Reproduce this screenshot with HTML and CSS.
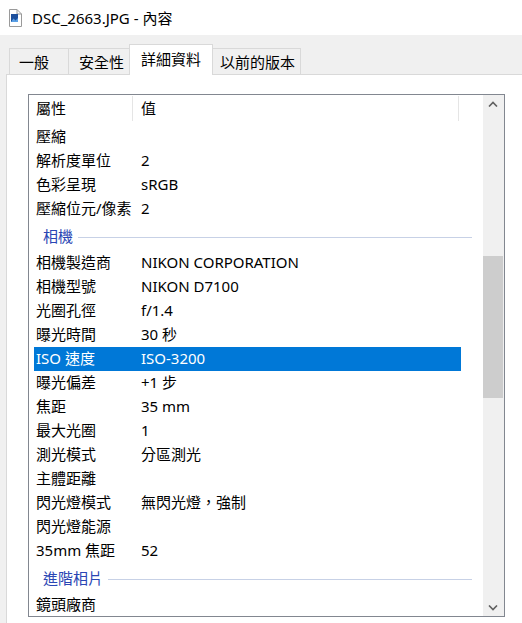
FILE: index.html
```html
<!DOCTYPE html>
<html lang="zh-Hant">
<head>
    <meta charset="UTF-8">
    <title>DSC_2663.JPG - 內容</title>
    <link rel="stylesheet" href="styles.css">
</head>
<body>
    <div class="titlebar">
        <svg class="file-icon" width="16" height="18" viewBox="0 0 16 18">
            <path d="M2.5 0.5 H10 L14.5 5 V17.5 H2.5 Z" fill="#fff" stroke="#9a9a9a"/>
            <path d="M10 0.5 V5 H14.5" fill="none" stroke="#9a9a9a"/>
            <rect x="4" y="5" width="7" height="8" fill="#1d4f9c"/>
            <path d="M4 13 L6.5 9.5 L8.5 11.5 L11 9 V13 Z" fill="#5aa0e6"/>
        </svg>
        <span class="title">DSC_2663.JPG - 內容</span>
    </div>

    <div class="tabs">
        <div class="tab tab-general">一般</div>
        <div class="tab tab-security">安全性</div>
        <div class="tab tab-details active">詳細資料</div>
        <div class="tab tab-versions">以前的版本</div>
    </div>

    <div class="panel">
        <div class="listview">
            <div class="list-content">
                <div class="list-header">
                    <div class="col-name">屬性</div>
                    <div class="col-value">值</div>
                </div>

                <div class="row"><span class="name">壓縮</span><span class="value"></span></div>
                <div class="row"><span class="name">解析度單位</span><span class="value">2</span></div>
                <div class="row"><span class="name">色彩呈現</span><span class="value">sRGB</span></div>
                <div class="row"><span class="name">壓縮位元/像素</span><span class="value">2</span></div>

                <div class="section"><span class="section-title">相機</span><span class="section-line"></span></div>

                <div class="row"><span class="name">相機製造商</span><span class="value">NIKON CORPORATION</span></div>
                <div class="row"><span class="name">相機型號</span><span class="value">NIKON D7100</span></div>
                <div class="row"><span class="name">光圈孔徑</span><span class="value">f/1.4</span></div>
                <div class="row"><span class="name">曝光時間</span><span class="value">30 秒</span></div>
                <div class="row selected"><span class="name">ISO 速度</span><span class="value">ISO-3200</span></div>
                <div class="row"><span class="name">曝光偏差</span><span class="value">+1 步</span></div>
                <div class="row"><span class="name">焦距</span><span class="value">35 mm</span></div>
                <div class="row"><span class="name">最大光圈</span><span class="value">1</span></div>
                <div class="row"><span class="name">測光模式</span><span class="value">分區測光</span></div>
                <div class="row"><span class="name">主體距離</span><span class="value"></span></div>
                <div class="row"><span class="name">閃光燈模式</span><span class="value">無閃光燈，強制</span></div>
                <div class="row"><span class="name">閃光燈能源</span><span class="value"></span></div>
                <div class="row"><span class="name">35mm 焦距</span><span class="value">52</span></div>

                <div class="section"><span class="section-title">進階相片</span><span class="section-line"></span></div>

                <div class="row"><span class="name">鏡頭廠商</span><span class="value"></span></div>
            </div>

            <div class="scrollbar">
                <div class="scroll-btn">
                    <svg width="10" height="6" viewBox="0 0 10 6"><polyline points="1,5.5 5,1.5 9,5.5" fill="none" stroke="#606060" stroke-width="1.6"/></svg>
                </div>
                <div class="scroll-track">
                    <div class="scroll-thumb"></div>
                </div>
                <div class="scroll-btn">
                    <svg width="10" height="6" viewBox="0 0 10 6"><polyline points="1,0.5 5,4.5 9,0.5" fill="none" stroke="#606060" stroke-width="1.6"/></svg>
                </div>
            </div>
        </div>
    </div>
</body>
</html>
```

FILE: styles.css
```css
body {
    margin: 0;
    background-color: #f0f0f0;
    font-family: "Noto Sans", "Noto Sans CJK TC", sans-serif;
    font-size: 15px;
    color: #000;
    overflow: hidden;
}

/* window title */
.titlebar {
    height: 35px;
    background-color: #fff;
    display: flex;
    align-items: center;
    padding-left: 7px;
}

.file-icon {
    display: block;
}

.title {
    margin-left: 9px;
    line-height: 20px;
}

/* tab strip */
.tabs {
    display: flex;
    align-items: flex-end;
    padding-left: 9px;
    margin-top: 10px;
    height: 29px;
    position: relative;
    z-index: 1;
}

.tab {
    height: 25px;
    line-height: 26px;
    background-color: #f0f0f0;
    border: 1px solid #d9d9d9;
    border-bottom: none;
    box-sizing: content-box;
    white-space: nowrap;
}

.tab + .tab {
    margin-left: -1px;
}

.tab-general { width: 49px; padding-left: 9px; }
.tab-security { width: 50px; padding-left: 10px; }
.tab-details { width: 71px; padding-left: 11px; }
.tab-versions { width: 80px; padding-left: 7px; }

.tab.active {
    height: 30px;
    line-height: 28px;
    background-color: #fff;
    margin-bottom: -1px;
    position: relative;
    z-index: 2;
}

/* page body */
.panel {
    margin-left: 6px;
    height: 529px;
    background-color: #fff;
    border-top: 1px solid #d9d9d9;
    border-left: 1px solid #d9d9d9;
    padding: 19px 0 0 21px;
}

.listview {
    width: 475px;
    height: 521px;
    border: 1px solid #828790;
    display: flex;
}

.list-content {
    flex: 1;
    overflow: hidden;
    padding-left: 5px;
}

.list-header {
    display: flex;
    height: 26px;
    line-height: 26px;
    margin-bottom: 4px;
}

.col-name,
.col-value {
    position: relative;
}

.col-name {
    width: 97px;
    padding-left: 2px;
}

.col-value {
    width: 318px;
    padding-left: 8px;
}

.col-name::after,
.col-value::after {
    content: "";
    position: absolute;
    right: 0;
    top: 1px;
    bottom: 0;
    width: 1px;
    background-color: #e5e5e5;
}

.row {
    display: flex;
    width: 427px;
    height: 24px;
    line-height: 23px;
    white-space: nowrap;
}

.row .name {
    width: 105px;
    padding-left: 2px;
    flex-shrink: 0;
}

.row.selected {
    background-color: #0078d7;
    color: #fff;
}

.section {
    display: flex;
    align-items: center;
    width: 429px;
    height: 30px;
    padding-left: 9px;
}

.section-title {
    color: #2a46b4;
    line-height: 20px;
}

.section-line {
    flex: 1;
    height: 1px;
    margin-left: 5px;
    margin-top: 2px;
    background-color: #c7d1e6;
}

/* vertical scrollbar */
.scrollbar {
    width: 21px;
    background-color: #f0f0f0;
    display: flex;
    flex-direction: column;
}

.scroll-btn {
    height: 17px;
    display: flex;
    align-items: center;
    justify-content: center;
    padding-right: 1px;
}

.scroll-track {
    flex: 1;
}

.scroll-thumb {
    margin-top: 144px;
    width: 20px;
    height: 142px;
    background-color: #cdcdcd;
}
```
